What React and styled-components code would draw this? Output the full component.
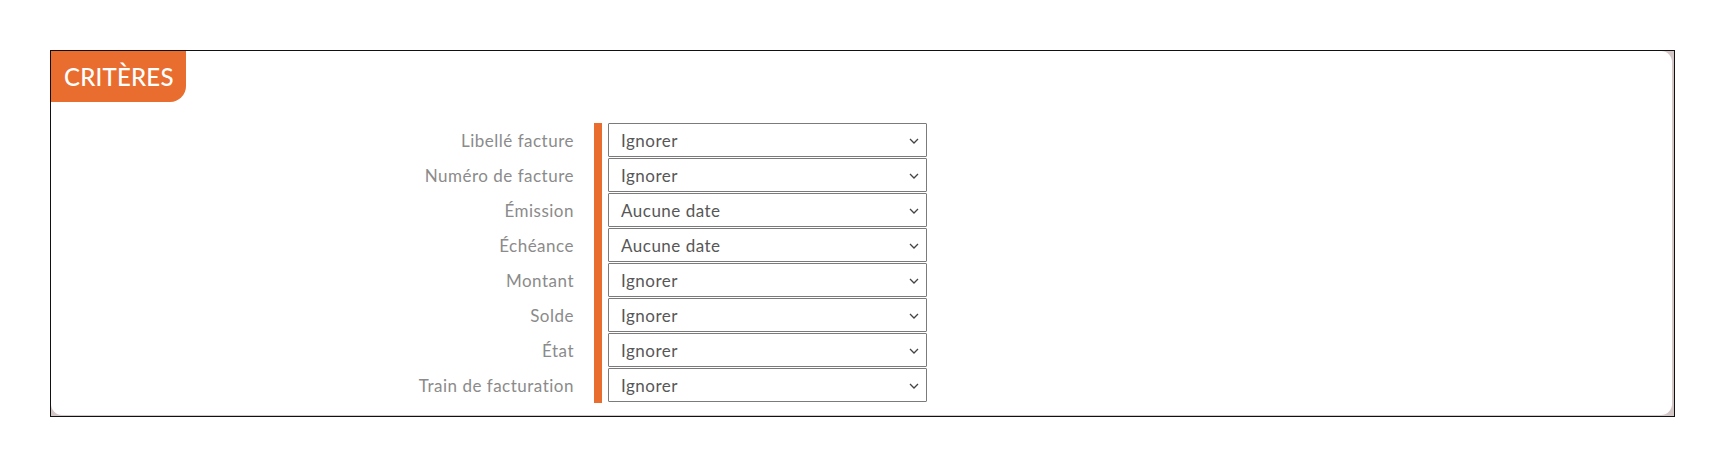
import React from "react";
import styled, { createGlobalStyle } from "styled-components";

const Global = createGlobalStyle`
  body {
    margin: 8px;
    background: #ffffff;
    font-family: "Lato", "Open Sans", sans-serif;
  }
`;

const Frame = styled.section`
  margin: 42px;
  border: 1px solid #111;
  background: #d3c6c6;
  height: 365px;
  box-sizing: content-box;
  display: flex;
`;

const Panel = styled.div`
  flex: 1;
  margin: 0 2px 1px 0;
  background: #fff;
  border-radius: 11px;
  display: flex;
  flex-direction: column;
  align-items: flex-start;
`;

const Tab = styled.h2`
  margin: 0;
  height: 51px;
  width: 135px;
  box-sizing: border-box;
  padding: 0 0 0 13px;
  display: flex;
  align-items: center;
  background: #e96d2e;
  color: #fff;
  font-family: "Lato", sans-serif;
  font-weight: 500;
  font-size: 24px;
  letter-spacing: 0.2px;
  border-radius: 0 0 16px 0;
`;

const Form = styled.div`
  margin-top: 21px;
  display: flex;
  flex-direction: column;
`;

const Row = styled.div`
  display: flex;
  align-items: stretch;
  height: 35px;
`;

const Label = styled.label`
  width: 543px;
  padding-right: 20px;
  box-sizing: border-box;
  display: flex;
  align-items: center;
  justify-content: flex-end;
  color: #8b8b8b;
  font-size: 17px;
  letter-spacing: 0.5px;
`;

const Field = styled.div`
  border-left: 8px solid #e96d2e;
  padding: 0 0 1px 6px;
  position: relative;
`;

const Select = styled.select`
  appearance: none;
  -webkit-appearance: none;
  width: 319px;
  height: 34px;
  margin: 0;
  border: 1px solid #7b7b7b;
  border-radius: 1px;
  background: #fff;
  padding: 0 24px 0 12px;
  font-family: "Lato", sans-serif;
  font-size: 17px;
  letter-spacing: 0.5px;
  color: #575757;
  outline: none;
`;

const Chevron = styled.svg`
  position: absolute;
  right: 8px;
  top: 15px;
  width: 10px;
  height: 6px;
  pointer-events: none;
`;

const rows = [
  ["Libellé facture", "Ignorer"],
  ["Numéro de facture", "Ignorer"],
  ["Émission", "Aucune date"],
  ["Échéance", "Aucune date"],
  ["Montant", "Ignorer"],
  ["Solde", "Ignorer"],
  ["État", "Ignorer"],
  ["Train de facturation", "Ignorer"],
];

export default function App() {
  return (
    <>
      <Global />
      <Frame>
        <Panel>
          <Tab>CRITÈRES</Tab>
          <Form>
            {rows.map(([label, value], i) => (
              <Row key={label}>
                <Label htmlFor={`f${i}`}>{label}</Label>
                <Field>
                  <Select id={`f${i}`} defaultValue={value}>
                    <option>{value}</option>
                  </Select>
                  <Chevron viewBox="0 0 10 6">
                    <path d="M1 1 L5 5 L9 1" fill="none" stroke="#444" strokeWidth="1.3" />
                  </Chevron>
                </Field>
              </Row>
            ))}
          </Form>
        </Panel>
      </Frame>
    </>
  );
}
